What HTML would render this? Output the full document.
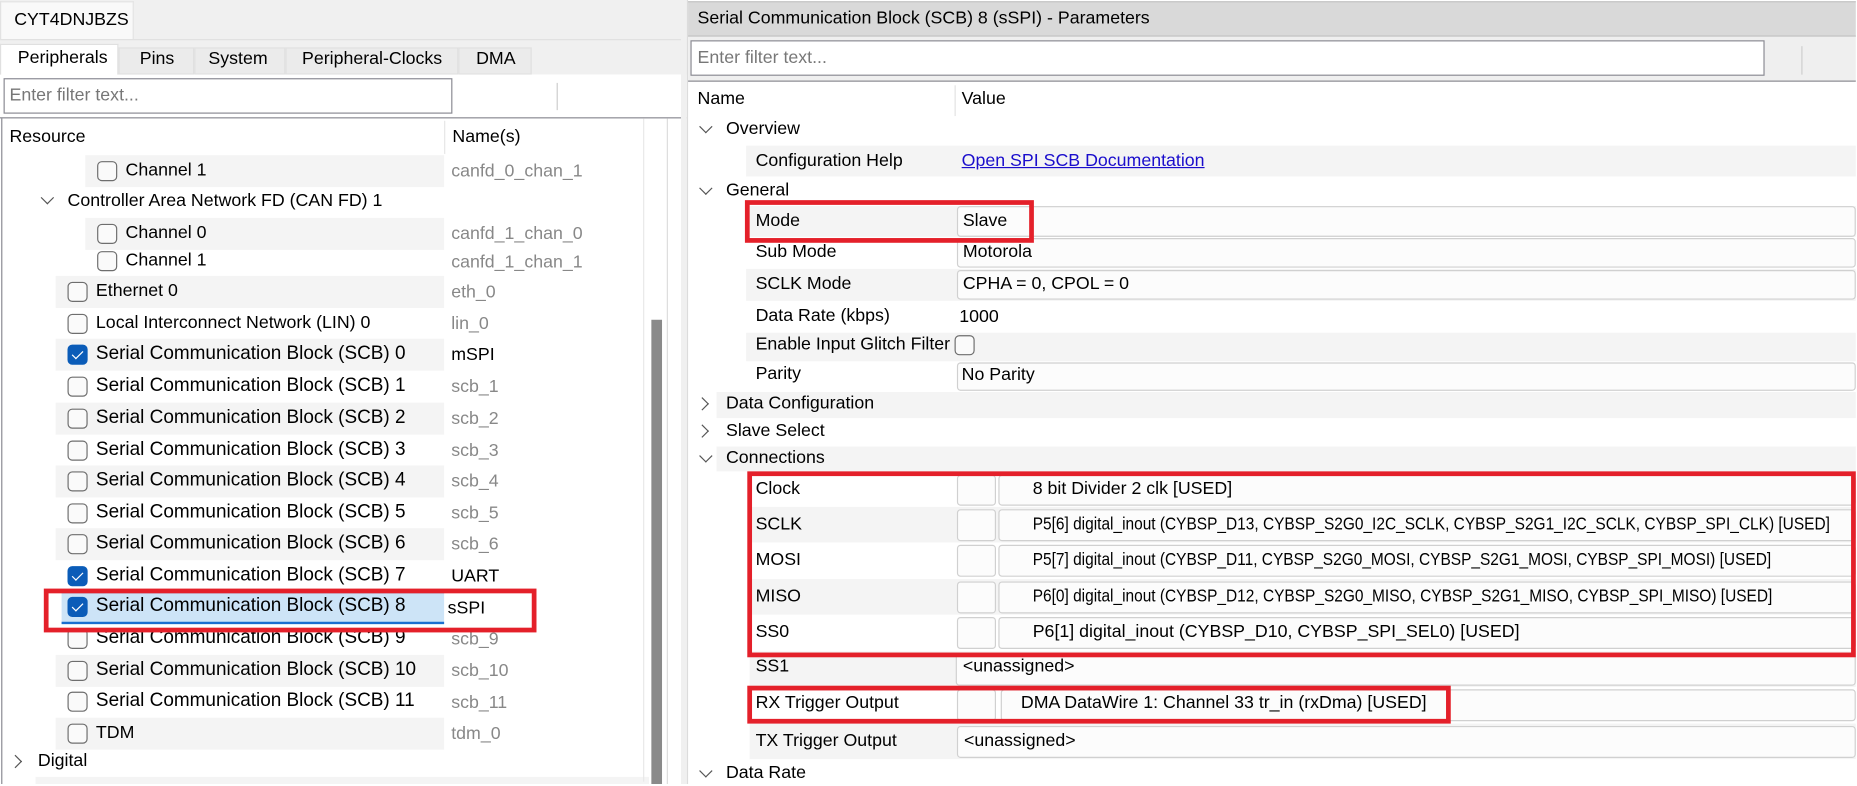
<!DOCTYPE html>
<html><head><meta charset="utf-8">
<style>
*{box-sizing:border-box;margin:0;padding:0}
body{width:1857px;height:783px;overflow:hidden;background:#fff;font-family:"Segoe UI","Liberation Sans",sans-serif;font-size:15px;color:#000;position:relative}
#w{position:absolute;left:0;top:0;width:1568px;height:662px;transform:scale(1.1843);transform-origin:0 0}
.a{position:absolute;white-space:nowrap;line-height:22px}
.cb{position:absolute;width:17px;height:17px;border:1px solid #6e6e6e;border-radius:4px;background:#fafafa}
.cb.on{background:#0b5cb8;border-color:#0b5cb8}
.cb.on::after{content:"";position:absolute;left:5px;top:2px;width:4px;height:8px;border:solid #fff;border-width:0 1.5px 1.5px 0;transform:rotate(45deg)}
.g{color:#888}
.chev{position:absolute;width:8px;height:8px;border:solid #555;border-width:0 1.3px 1.3px 0}
.dn{transform:rotate(45deg)}
.rt{transform:rotate(-45deg)}
.red{position:absolute;border:4px solid #e4202a}
.vb{position:absolute;border:1px solid #d0d0d0;border-radius:3px;background:#fcfcfc}
.sq{transform:scaleX(0.87);transform-origin:0 0}
.sc{font-size:16px}
</style></head><body><div id="w">

<!-- LEFT PANEL -->
<div class="a" style="left:0;top:0;width:580px;height:33px;background:#f0f0f0"></div>
<div class="a" style="left:0;top:1px;width:113px;height:32px;background:#f9f9f9;border:1px solid #e2e2e2;border-bottom:none"></div>
<div class="a" style="left:12px;top:6px">CYT4DNJBZS</div>
<div class="a" style="left:0;top:33px;width:580px;height:30px;background:#f0f0f0;border-top:1px solid #e0e0e0"></div>
<div class="a" style="left:0;top:37px;width:100px;height:27px;background:#fff;border:1px solid #e0e0e0;border-bottom:none"></div>
<div class="a" style="left:100px;top:40px;width:64px;height:23px;background:#ebebeb;border:1px solid #e0e0e0"></div>
<div class="a" style="left:164px;top:40px;width:77px;height:23px;background:#ebebeb;border:1px solid #e0e0e0"></div>
<div class="a" style="left:241px;top:40px;width:146px;height:23px;background:#ebebeb;border:1px solid #e0e0e0"></div>
<div class="a" style="left:387px;top:40px;width:62px;height:23px;background:#ebebeb;border:1px solid #e0e0e0"></div>
<div class="a" style="left:15px;top:38px">Peripherals</div>
<div class="a" style="left:118px;top:39px">Pins</div>
<div class="a" style="left:176px;top:39px">System</div>
<div class="a" style="left:255px;top:39px">Peripheral-Clocks</div>
<div class="a" style="left:402px;top:39px">DMA</div>
<div class="a" style="left:0;top:63px;width:580px;height:37px;background:#fff"></div>
<div class="a" style="left:3px;top:66px;width:379px;height:30px;border:1px solid #8a8a92;background:#fff"></div>
<div class="a" style="left:8px;top:70px;color:#777">Enter filter text...</div>
<div class="a" style="left:470px;top:70px;width:1px;height:23px;background:#ccc"></div>
<div class="a" style="left:0;top:99px;width:580px;height:1px;background:#8a8a92"></div>
<div class="a" style="left:1px;top:100px;width:1px;height:562px;background:#8a8a92"></div>
<div class="a" style="left:375px;top:102px;width:1px;height:28px;background:#e6e6e6"></div>
<div class="a" style="left:8px;top:105px">Resource</div>
<div class="a" style="left:382px;top:105px">Name(s)</div>

<div class="a" style="left:72px;top:131px;width:303px;height:27px;background:#f4f4f4"></div>
<div class="cb" style="left:82px;top:136px"></div><div class="a" style="left:106px;top:133px">Channel 1</div><div class="a g" style="left:381px;top:134px">canfd_0_chan_1</div>

<div class="chev dn" style="left:36px;top:163px"></div><div class="a" style="left:57px;top:159px">Controller Area Network FD (CAN FD) 1</div>

<div class="a" style="left:72px;top:184px;width:303px;height:27px;background:#f4f4f4"></div>
<div class="cb" style="left:82px;top:189px"></div><div class="a" style="left:106px;top:186px">Channel 0</div><div class="a g" style="left:381px;top:187px">canfd_1_chan_0</div>

<div class="cb" style="left:82px;top:212px"></div><div class="a" style="left:106px;top:209px">Channel 1</div><div class="a g" style="left:381px;top:211px">canfd_1_chan_1</div>

<div class="a" style="left:47px;top:233px;width:328px;height:27px;background:#f4f4f4"></div>
<div class="cb" style="left:57px;top:238px"></div><div class="a" style="left:81px;top:235px">Ethernet 0</div><div class="a g" style="left:381px;top:236px">eth_0</div>

<div class="cb" style="left:57px;top:265px"></div><div class="a" style="left:81px;top:262px">Local Interconnect Network (LIN) 0</div><div class="a g" style="left:381px;top:263px">lin_0</div>

<div class="a" style="left:47px;top:286px;width:328px;height:27px;background:#f4f4f4"></div>
<div class="cb on" style="left:57px;top:291px"></div><div class="a sc" style="left:81px;top:288px">Serial Communication Block (SCB) 0</div><div class="a" style="left:381px;top:289px">mSPI</div>

<div class="cb" style="left:57px;top:318px"></div><div class="a sc" style="left:81px;top:315px">Serial Communication Block (SCB) 1</div><div class="a g" style="left:381px;top:316px">scb_1</div>

<div class="a" style="left:47px;top:340px;width:328px;height:27px;background:#f4f4f4"></div>
<div class="cb" style="left:57px;top:345px"></div><div class="a sc" style="left:81px;top:342px">Serial Communication Block (SCB) 2</div><div class="a g" style="left:381px;top:343px">scb_2</div>

<div class="cb" style="left:57px;top:372px"></div><div class="a sc" style="left:81px;top:369px">Serial Communication Block (SCB) 3</div><div class="a g" style="left:381px;top:370px">scb_3</div>

<div class="a" style="left:47px;top:393px;width:328px;height:27px;background:#f4f4f4"></div>
<div class="cb" style="left:57px;top:398px"></div><div class="a sc" style="left:81px;top:395px">Serial Communication Block (SCB) 4</div><div class="a g" style="left:381px;top:396px">scb_4</div>

<div class="cb" style="left:57px;top:425px"></div><div class="a sc" style="left:81px;top:422px">Serial Communication Block (SCB) 5</div><div class="a g" style="left:381px;top:423px">scb_5</div>

<div class="a" style="left:47px;top:446px;width:328px;height:27px;background:#f4f4f4"></div>
<div class="cb" style="left:57px;top:451px"></div><div class="a sc" style="left:81px;top:448px">Serial Communication Block (SCB) 6</div><div class="a g" style="left:381px;top:449px">scb_6</div>

<div class="cb on" style="left:57px;top:478px"></div><div class="a sc" style="left:81px;top:475px">Serial Communication Block (SCB) 7</div><div class="a" style="left:381px;top:476px">UART</div>

<div class="a" style="left:52px;top:500px;width:323px;height:27px;background:#cde4f7;border-top:1px solid #7fb1e0;border-bottom:2px solid #1a6fd0"></div>
<div class="cb on" style="left:57px;top:504px"></div><div class="a sc" style="left:81px;top:501px">Serial Communication Block (SCB) 8</div><div class="a" style="left:378px;top:503px">sSPI</div>

<div class="cb" style="left:57px;top:531px"></div><div class="a sc" style="left:81px;top:528px">Serial Communication Block (SCB) 9</div><div class="a g" style="left:381px;top:529px">scb_9</div>

<div class="a" style="left:47px;top:553px;width:328px;height:27px;background:#f4f4f4"></div>
<div class="cb" style="left:57px;top:558px"></div><div class="a sc" style="left:81px;top:555px">Serial Communication Block (SCB) 10</div><div class="a g" style="left:381px;top:556px">scb_10</div>

<div class="cb" style="left:57px;top:584px"></div><div class="a sc" style="left:81px;top:581px">Serial Communication Block (SCB) 11</div><div class="a g" style="left:381px;top:583px">scb_11</div>

<div class="a" style="left:47px;top:606px;width:328px;height:27px;background:#f4f4f4"></div>
<div class="cb" style="left:57px;top:611px"></div><div class="a" style="left:81px;top:608px">TDM</div><div class="a g" style="left:381px;top:609px">tdm_0</div>

<div class="chev rt" style="left:9px;top:639px"></div><div class="a" style="left:32px;top:632px">Digital</div>
<div class="a" style="left:30px;top:656px;width:518px;height:6px;background:#f4f4f4"></div>

<div class="red" style="left:37px;top:497px;width:416px;height:37px"></div>

<div class="a" style="left:543px;top:100px;width:1px;height:560px;background:#e8e8e8"></div>
<div class="a" style="left:550px;top:270px;width:9px;height:392px;background:#8a8a8a"></div>
<div class="a" style="left:563px;top:100px;width:1px;height:562px;background:#ddd"></div>
<div class="a" style="left:575px;top:0;width:5px;height:662px;background:#f0f0f0"></div>
<div class="a" style="left:580px;top:0;width:1px;height:662px;background:#dcdcdc"></div>

<!-- RIGHT PANEL -->
<div class="a" style="left:581px;top:1px;width:986px;height:30px;background:#d9d9d9;border-top:1px solid #c4c4c4;border-bottom:1px solid #bdbdbd"></div>
<div class="a" style="left:589px;top:5px">Serial Communication Block (SCB) 8 (sSPI) - Parameters</div>
<div class="a" style="left:581px;top:31px;width:986px;height:38px;background:#efefef;border-bottom:1px solid #8a8a92"></div>
<div class="a" style="left:583px;top:34px;width:907px;height:30px;background:#fff;border:1px solid #8a8a92"></div>
<div class="a" style="left:589px;top:38px;color:#777">Enter filter text...</div>
<div class="a" style="left:1521px;top:39px;width:1px;height:24px;background:#ccc"></div>
<div class="a" style="left:806px;top:72px;width:1px;height:26px;background:#e3e3e3"></div>
<div class="a" style="left:589px;top:73px">Name</div>
<div class="a" style="left:812px;top:73px">Value</div>

<div class="chev dn" style="left:592px;top:103px"></div><div class="a" style="left:613px;top:98px">Overview</div>
<div class="a" style="left:630px;top:123px;width:937px;height:26px;background:#f4f4f4"></div>
<div class="a" style="left:638px;top:125px">Configuration Help</div>
<div class="a" style="left:812px;top:125px;color:#1a0dcc;text-decoration:underline">Open SPI SCB Documentation</div>
<div class="chev dn" style="left:592px;top:155px"></div><div class="a" style="left:613px;top:150px">General</div>

<div class="a" style="left:630px;top:174px;width:937px;height:26px;background:#f4f4f4"></div>
<div class="vb" style="left:808px;top:174px;width:759px;height:26px"></div>
<div class="a" style="left:638px;top:176px">Mode</div><div class="a" style="left:813px;top:176px">Slave</div>
<div class="vb" style="left:808px;top:201px;width:759px;height:25px"></div>
<div class="a" style="left:638px;top:202px">Sub Mode</div><div class="a" style="left:813px;top:202px">Motorola</div>
<div class="a" style="left:630px;top:227px;width:937px;height:27px;background:#f4f4f4"></div>
<div class="vb" style="left:808px;top:228px;width:759px;height:25px"></div>
<div class="a" style="left:638px;top:229px">SCLK Mode</div><div class="a" style="left:813px;top:229px">CPHA = 0, CPOL = 0</div>
<div class="a" style="left:638px;top:256px">Data Rate (kbps)</div><div class="a" style="left:810px;top:257px">1000</div>
<div class="a" style="left:630px;top:281px;width:937px;height:24px;background:#f4f4f4"></div>
<div class="a" style="left:638px;top:280px">Enable Input Glitch Filter</div>
<div class="cb" style="left:806px;top:283px"></div>
<div class="vb" style="left:808px;top:306px;width:759px;height:24px"></div>
<div class="a" style="left:638px;top:305px">Parity</div><div class="a" style="left:812px;top:306px">No Parity</div>

<div class="a" style="left:605px;top:331px;width:962px;height:22px;background:#f4f4f4"></div>
<div class="chev rt" style="left:589px;top:337px"></div><div class="a" style="left:613px;top:330px">Data Configuration</div>
<div class="chev rt" style="left:589px;top:360px"></div><div class="a" style="left:613px;top:353px">Slave Select</div>
<div class="a" style="left:605px;top:377px;width:962px;height:21px;background:#f4f4f4"></div>
<div class="chev dn" style="left:592px;top:381px"></div><div class="a" style="left:613px;top:376px">Connections</div>

<div class="a" style="left:633px;top:428px;width:934px;height:30px;background:#f4f4f4"></div>
<div class="a" style="left:633px;top:489px;width:934px;height:30px;background:#f4f4f4"></div>
<div class="a" style="left:633px;top:550px;width:934px;height:30px;background:#f4f4f4"></div>
<div class="a" style="left:633px;top:611px;width:934px;height:30px;background:#f4f4f4"></div>

<div class="vb" style="left:808px;top:401px;width:33px;height:26px"></div><div class="vb" style="left:843px;top:401px;width:724px;height:26px"></div>
<div class="a" style="left:638px;top:402px">Clock</div><div class="a" style="left:872px;top:402px">8 bit Divider 2 clk [USED]</div>
<div class="vb" style="left:808px;top:430px;width:33px;height:27px"></div><div class="vb" style="left:843px;top:430px;width:724px;height:27px"></div>
<div class="a" style="left:638px;top:432px">SCLK</div><div class="a sq" style="left:872px;top:432px">P5[6] digital_inout (CYBSP_D13, CYBSP_S2G0_I2C_SCLK, CYBSP_S2G1_I2C_SCLK, CYBSP_SPI_CLK) [USED]</div>
<div class="vb" style="left:808px;top:460px;width:33px;height:27px"></div><div class="vb" style="left:843px;top:460px;width:724px;height:27px"></div>
<div class="a" style="left:638px;top:462px">MOSI</div><div class="a sq" style="left:872px;top:462px">P5[7] digital_inout (CYBSP_D11, CYBSP_S2G0_MOSI, CYBSP_S2G1_MOSI, CYBSP_SPI_MOSI) [USED]</div>
<div class="vb" style="left:808px;top:491px;width:33px;height:27px"></div><div class="vb" style="left:843px;top:491px;width:724px;height:27px"></div>
<div class="a" style="left:638px;top:493px">MISO</div><div class="a sq" style="left:872px;top:493px">P6[0] digital_inout (CYBSP_D12, CYBSP_S2G0_MISO, CYBSP_S2G1_MISO, CYBSP_SPI_MISO) [USED]</div>
<div class="vb" style="left:808px;top:521px;width:33px;height:27px"></div><div class="vb" style="left:843px;top:521px;width:724px;height:27px"></div>
<div class="a" style="left:638px;top:523px">SS0</div><div class="a" style="left:872px;top:523px">P6[1] digital_inout (CYBSP_D10, CYBSP_SPI_SEL0) [USED]</div>
<div class="vb" style="left:807px;top:552px;width:760px;height:27px"></div>
<div class="a" style="left:638px;top:552px">SS1</div><div class="a" style="left:813px;top:552px">&lt;unassigned&gt;</div>
<div class="vb" style="left:808px;top:582px;width:33px;height:27px"></div><div class="vb" style="left:845px;top:582px;width:722px;height:27px"></div>
<div class="a" style="left:638px;top:583px">RX Trigger Output</div><div class="a" style="left:862px;top:583px">DMA DataWire 1: Channel 33 tr_in (rxDma) [USED]</div>
<div class="vb" style="left:808px;top:613px;width:759px;height:27px"></div>
<div class="a" style="left:638px;top:615px">TX Trigger Output</div><div class="a" style="left:814px;top:615px">&lt;unassigned&gt;</div>
<div class="chev dn" style="left:592px;top:647px"></div><div class="a" style="left:613px;top:642px">Data Rate</div>

<div class="red" style="left:629px;top:169px;width:244px;height:36px"></div>
<div class="red" style="left:631px;top:398px;width:936px;height:157px"></div>
<div class="red" style="left:631px;top:579px;width:594px;height:32px"></div>
</div></body></html>
